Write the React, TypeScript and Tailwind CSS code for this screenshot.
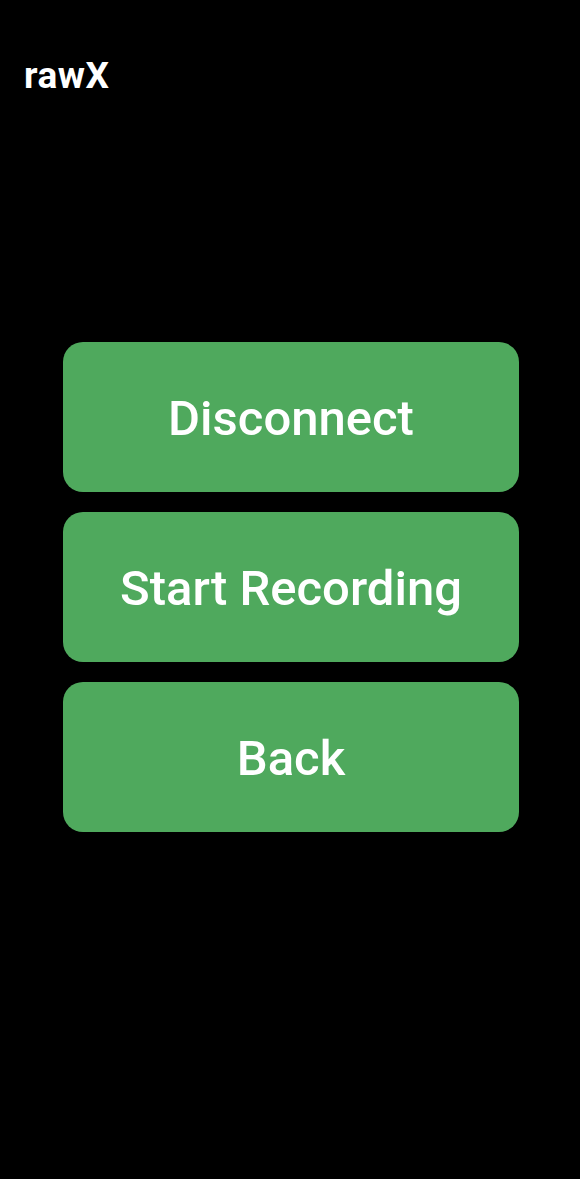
import React from 'react';

const buttons = ['Disconnect', 'Start Recording', 'Back'];

const App = () => {
  return (
    <div
      className="min-h-[1179px] w-full bg-black text-white"
      style={{ fontFamily: 'Roboto, "Noto Sans", sans-serif' }}
    >
      {/* Header */}
      <div className="px-6 pt-[54px]">
        <h1 className="text-[37px] font-bold leading-[43px] tracking-[0.5px]">rawX</h1>
      </div>

      {/* Actions */}
      <div className="mt-[245px] flex flex-col items-center gap-5 pl-[2px]">
        {buttons.map((label) => (
          <button
            key={label}
            className="flex h-[150px] w-[456px] items-center justify-center rounded-[20px] bg-[#4fa95d] pt-1 text-[49px] font-medium text-white"
          >
            {label}
          </button>
        ))}
      </div>
    </div>
  );
};

export default App;
